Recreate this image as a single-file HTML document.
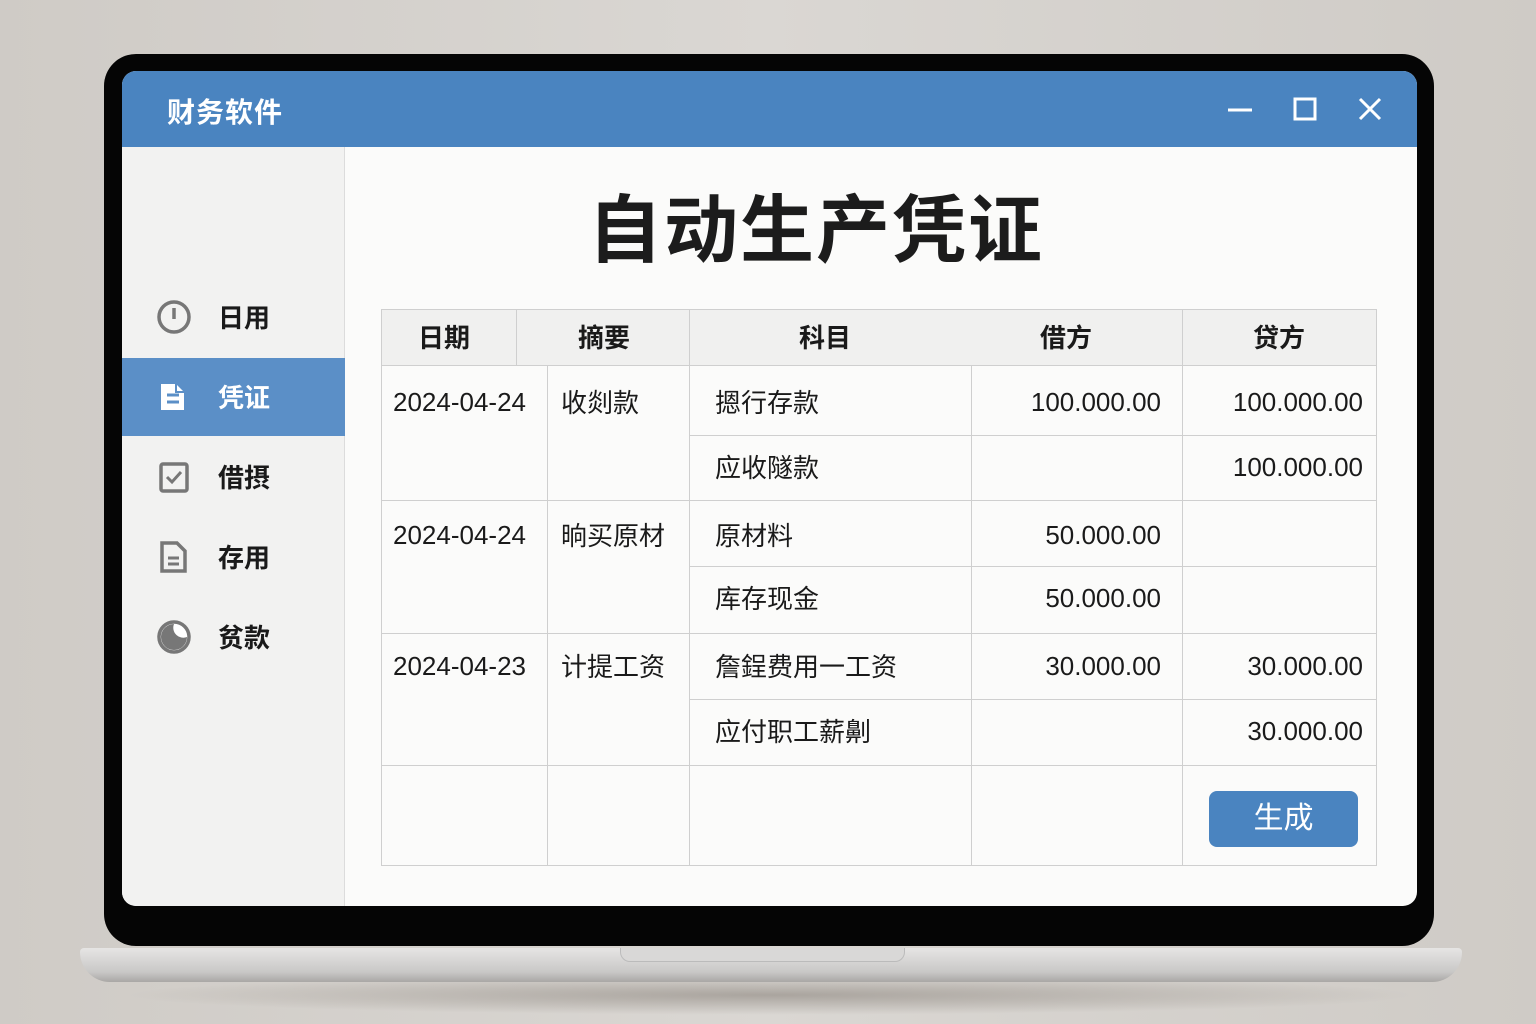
<!DOCTYPE html>
<html><head><meta charset="utf-8"><style>
*{margin:0;padding:0;box-sizing:border-box}
body{width:1536px;height:1024px;background:linear-gradient(90deg,#cfcbc6,#dad7d3 50%,#cfcbc6);position:relative;overflow:hidden;font-family:"Liberation Sans","Noto Sans CJK SC",sans-serif}
.abs{position:absolute}
.shadow{left:120px;top:975px;width:1300px;height:40px;background:radial-gradient(ellipse at center,rgba(80,70,60,.35),rgba(80,70,60,0) 70%)}
.bezel{left:104px;top:54px;width:1330px;height:892px;background:#050505;border-radius:32px}
.screen{left:122px;top:71px;width:1295px;height:835px;background:#fbfbfa;border-radius:14px;overflow:hidden}
.title{left:0;top:0;width:1295px;height:76px;background:#4a84c0}
.title span{position:absolute;left:45px;top:20px;color:#fff;font-size:28px;font-weight:bold;letter-spacing:1px}
.side{left:0;top:76px;width:223px;height:759px;background:#f2f2f1;border-right:1px solid #dcdcdc}
.item{position:absolute;left:0;width:223px;height:78px;font-size:26px;font-weight:bold;color:#1a1a1a}
.item .t{position:absolute;left:96px;top:20px}
.item svg{position:absolute;left:34px;top:21px}
.active{background:#5b8fc7;color:#fff}
h1{position:absolute;left:223px;width:942px;top:100px;text-align:center;font-size:74px;font-weight:bold;color:#1c1c1c;letter-spacing:2px}
.base{left:80px;top:948px;width:1382px;height:34px;background:linear-gradient(#e6e5e4,#c9c8c7 70%,#a9a7a5);border-radius:4px 4px 30px 30px}
.notch{left:620px;top:948px;width:285px;height:14px;background:#d9d8d7;border-radius:0 0 10px 10px;border:1px solid #bbb;border-top:none}
.c{position:absolute;font-size:26px;color:#1a1a1a}
.z{margin-top:-4px}
.line{position:absolute;background:#cfcfcf}
</style></head><body>
<div class="abs shadow"></div>
<div class="abs bezel"></div>
<div class="abs base"></div>
<div class="abs notch"></div>
<div class="abs screen">
 <div class="abs title"><span>财务软件</span>
  <svg class="abs" style="left:1100px;top:22px" width="180" height="34">
   <line x1="6" y1="17" x2="30" y2="17" stroke="#fff" stroke-width="3"/>
   <rect x="73" y="6" width="20" height="20" fill="none" stroke="#fff" stroke-width="3"/>
   <path d="M138 6 L158 26 M158 6 L138 26" stroke="#fff" stroke-width="3"/>
  </svg>
 </div>
 <div class="abs side">
  <div class="item" style="top:131px"><svg width="36" height="36"><circle cx="18" cy="18" r="15" fill="none" stroke="#777" stroke-width="3.5"/><line x1="18" y1="9" x2="18" y2="20" stroke="#777" stroke-width="3.5"/></svg><span class="t">日用</span></div>
  <div class="item active" style="top:211px"><svg width="36" height="36"><path d="M5 5 H20 L28 13 V31 H5 Z" fill="#fff"/><path d="M11 16 H23 M11 23 H23" stroke="#5b8fc7" stroke-width="3"/><path d="M20 5 L20 13 L28 13" fill="none" stroke="#5b8fc7" stroke-width="2"/></svg><span class="t">凭证</span></div>
  <div class="item" style="top:291px"><svg width="36" height="36"><rect x="5" y="5" width="26" height="27" rx="2" fill="none" stroke="#777" stroke-width="3.5"/><path d="M11 18 L16 23 L25 13" fill="none" stroke="#777" stroke-width="3"/></svg><span class="t">借摂</span></div>
  <div class="item" style="top:371px"><svg width="36" height="36"><path d="M6 4 H21 L29 12 V32 H6 Z" fill="none" stroke="#777" stroke-width="3.5"/><path d="M12 19 H23 M12 25 H23" stroke="#777" stroke-width="3"/></svg><span class="t">存用</span></div>
  <div class="item" style="top:451px"><svg width="36" height="36"><circle cx="18" cy="18" r="15" fill="#fff" stroke="#777" stroke-width="3.5"/><path d="M18 5 A13 13 0 1 0 31 18 A10 10 0 0 1 18 5Z" fill="#777"/></svg><span class="t">贫款</span></div>
 </div>
 <h1>自动生产凭证</h1>
</div>
<!-- table -->
<div class="abs" style="left:381px;top:309px;width:996px;height:557px;border:1px solid #cfcfcf;background:#fbfbfa"></div>
<div class="abs" style="left:382px;top:310px;width:994px;height:56px;background:#f0f0ef;border-bottom:1px solid #cfcfcf"></div>
<div class="line" style="left:516px;top:310px;width:1px;height:56px"></div>
<div class="line" style="left:689px;top:310px;width:1px;height:556px"></div>
<div class="line" style="left:1182px;top:310px;width:1px;height:556px"></div>
<div class="line" style="left:547px;top:366px;width:1px;height:500px"></div>
<div class="line" style="left:971px;top:366px;width:1px;height:500px"></div>
<div class="line" style="left:381px;top:500px;width:996px;height:1px"></div>
<div class="line" style="left:381px;top:633px;width:996px;height:1px"></div>
<div class="line" style="left:381px;top:765px;width:996px;height:1px"></div>
<div class="line" style="left:690px;top:435px;width:687px;height:1px"></div>
<div class="line" style="left:690px;top:566px;width:687px;height:1px"></div>
<div class="line" style="left:690px;top:699px;width:687px;height:1px"></div>
<div class="c z" style="left:418px;top:322px;font-weight:bold">日期</div>
<div class="c z" style="left:578px;top:322px;font-weight:bold">摘要</div>
<div class="c z" style="left:799px;top:322px;font-weight:bold">科目</div>
<div class="c z" style="left:1040px;top:322px;font-weight:bold">借方</div>
<div class="c z" style="left:1253px;top:322px;font-weight:bold">贷方</div>

<div class="c" style="left:393px;top:387px">2024-04-24</div>
<div class="c z" style="left:561px;top:387px">收剡款</div>
<div class="c z" style="left:715px;top:387px">摁行存款</div>
<div class="c" style="left:971px;top:387px;width:190px;text-align:right">100.000.00</div>
<div class="c" style="left:1182px;top:387px;width:181px;text-align:right">100.000.00</div>
<div class="c z" style="left:715px;top:452px">应收隧款</div>
<div class="c" style="left:1182px;top:452px;width:181px;text-align:right">100.000.00</div>

<div class="c" style="left:393px;top:520px">2024-04-24</div>
<div class="c z" style="left:561px;top:520px">晌买原材</div>
<div class="c z" style="left:715px;top:520px">原材料</div>
<div class="c" style="left:971px;top:520px;width:190px;text-align:right">50.000.00</div>
<div class="c z" style="left:715px;top:583px">库存现金</div>
<div class="c" style="left:971px;top:583px;width:190px;text-align:right">50.000.00</div>

<div class="c" style="left:393px;top:651px">2024-04-23</div>
<div class="c z" style="left:561px;top:651px">计提工资</div>
<div class="c z" style="left:715px;top:651px">詹鋥费用一工资</div>
<div class="c" style="left:971px;top:651px;width:190px;text-align:right">30.000.00</div>
<div class="c" style="left:1182px;top:651px;width:181px;text-align:right">30.000.00</div>
<div class="c z" style="left:715px;top:716px">应付职工薪劓</div>
<div class="c" style="left:1182px;top:716px;width:181px;text-align:right">30.000.00</div>

<div class="abs" style="left:1209px;top:791px;width:149px;height:56px;background:#4a84c0;border-radius:8px;color:#fff;font-size:30px;text-align:center;line-height:56px">生成</div>
</body></html>
